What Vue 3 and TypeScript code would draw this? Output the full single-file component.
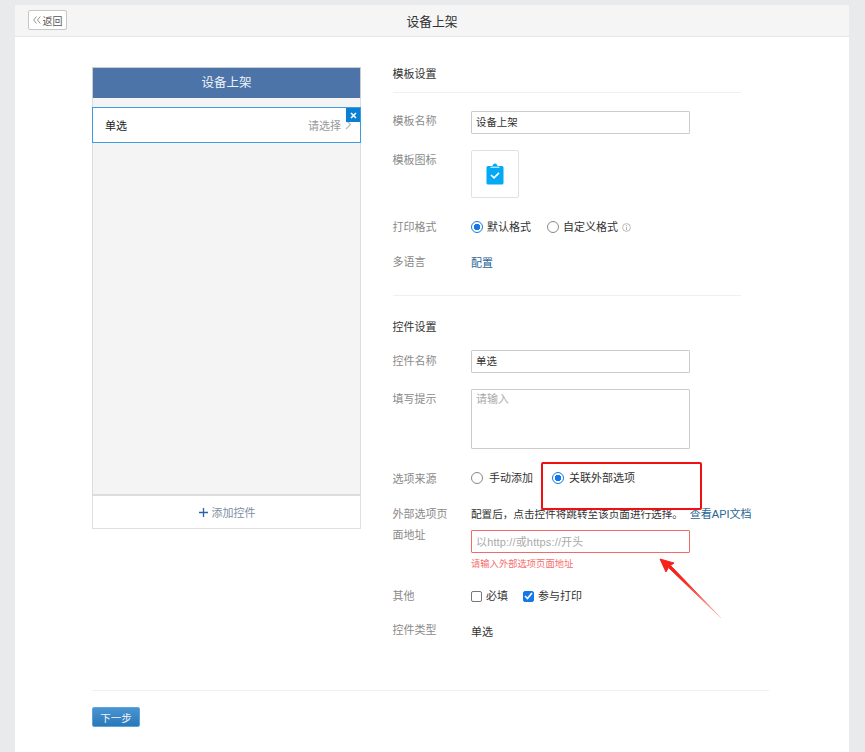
<script setup lang="ts">
const placeholder = '以http://或https://开头'
</script>

<template>
  <div class="page">
    <div class="card">
      <header class="top">
        <button class="back">
          <svg class="chev" width="8" height="8" viewBox="0 0 8 8"><path d="M3.500 .5L.7 4l2.800 3.500M7.300 .5L4.500 4l2.800 3.500" fill="none" stroke="#888" stroke-width=".9"/></svg>返回
        </button>
        <h1>设备上架</h1>
      </header>
      <main class="main">
        <section class="phone">
          <div class="phone-head">设备上架</div>
          <div class="phone-body">
            <div class="item">
              <span>单选</span>
              <span class="pick">请选择
                <svg width="7" height="11" viewBox="0 0 7 11"><path d="M1 1l4.500 4.500L1 10" fill="none" stroke="#bbb" stroke-width="1.200"/></svg>
              </span>
              <i class="close">
                <svg width="7" height="7" viewBox="0 0 7 7"><path d="M1 1l5 5M6 1L1 6" stroke="#fff" stroke-width="1.600"/></svg>
              </i>
            </div>
          </div>
          <div class="phone-foot">
            <svg class="plus" width="9" height="9" viewBox="0 0 9 9"><path d="M4.500 0v9M0 4.500h9" stroke="#2b64a4" stroke-width="1.300"/></svg>添加控件
          </div>
        </section>

        <section class="form">
          <h2 class="sec">模板设置</h2>
          <div class="row r-name">
            <label>模板名称</label>
            <div class="input">设备上架</div>
          </div>
          <div class="row r-icon">
            <label>模板图标</label>
            <div class="iconbox">
              <svg width="18" height="22" viewBox="0 0 18 22">
                <path d="M2 3h4.500C6.800 1.500 7.800.5 9 .5s2.200 1 2.500 2.500H16a1.500 1.500 0 0 1 1.500 1.500v15.500a1.500 1.500 0 0 1-1.500 1.500H2a1.500 1.500 0 0 1-1.500-1.500V4.500A1.500 1.500 0 0 1 2 3z" fill="#03a9f4"/>
                <path d="M4.500 4.200h9" stroke="#fff" stroke-width="1"/>
                <path d="M5 12l3 2.800 5-5" fill="none" stroke="#fff" stroke-width="1.700"/>
              </svg>
            </div>
          </div>
          <div class="row r-print">
            <label>打印格式</label>
            <div class="opts">
              <span class="opt"><i class="radio on"></i>默认格式</span>
              <span class="opt o2"><i class="radio"></i>自定义格式
                <svg class="info" width="9" height="9" viewBox="0 0 9 9"><circle cx="4.500" cy="4.500" r="3.900" fill="none" stroke="#aaa" stroke-width=".8"/><path d="M4.500 2v1M4.500 3.800V7" stroke="#aaa" stroke-width=".9"/></svg>
              </span>
            </div>
          </div>
          <div class="row r-lang">
            <label>多语言</label>
            <a class="link">配置</a>
          </div>
          <div class="divider"></div>

          <h2 class="sec plain">控件设置</h2>
          <div class="row r-ctl">
            <label>控件名称</label>
            <div class="input">单选</div>
          </div>
          <div class="row r-hint">
            <label>填写提示</label>
            <div class="input area">请输入</div>
          </div>
          <div class="row r-src">
            <label>选项来源</label>
            <div class="opts">
              <span class="opt"><i class="radio wide"></i>手动添加</span>
              <span class="opt o3"><i class="radio"></i>关联外部选项</span>
            </div>
          </div>
          <div class="row r-ext">
            <label>外部选项页面地址</label>
            <div class="ext">
              <div class="tip">配置后，点击控件将跳转至该页面进行选择。 <a class="link api">查看API文档</a></div>
              <div class="input err">{{ placeholder }}</div>
              <div class="errmsg">请输入外部选项页面地址</div>
            </div>
          </div>
          <div class="row r-other">
            <label>其他</label>
            <div class="opts">
              <span class="opt"><i class="check"></i>必填</span>
              <span class="opt o4"><i class="check on">
                <svg width="9" height="8" viewBox="0 0 9 8"><path d="M1 4l2.500 2.500L8 1" fill="none" stroke="#fff" stroke-width="1.700"/></svg>
              </i>参与打印</span>
            </div>
          </div>
          <div class="row r-type">
            <label>控件类型</label>
            <span>单选</span>
          </div>
        </section>
      </main>
      <footer class="foot">
        <button class="next">下一步</button>
      </footer>

      <div class="mark-box"></div>
      <svg class="mark-arrow" width="70" height="66" viewBox="0 0 70 66">
        <defs>
          <linearGradient id="fade" x1="1" y1="1" x2="0" y2="0">
            <stop offset="0" stop-color="#ff3b30" stop-opacity=".1"/>
            <stop offset=".6" stop-color="#f5231b"/>
          </linearGradient>
        </defs>
        <path d="M1 1l14 4-3.500 2.500L62 60 9.500 9.500 7 14z" fill="url(#fade)" stroke="url(#fade)" stroke-width="1"/>
      </svg>
    </div>
  </div>
</template>

<style>
html, body { margin: 0; background: #e9eaec; }
</style>

<style scoped>
.page {
  width: 865px;
  height: 752px;
  overflow: hidden;
  padding: 5px 16px 0 15px;
  box-sizing: border-box;
  font-family: "Liberation Sans", "Noto Sans CJK SC", sans-serif;
  font-size: 11px;
  color: #333;
}
.card { position: relative; background: #fff; height: 760px; }
.top {
  position: relative;
  height: 31px;
  background: #f5f5f5;
  border-bottom: 1px solid #e3e6ea;
  display: flex;
  align-items: center;
  justify-content: center;
}
.top h1 { margin: 0; font-size: 12.800px; font-weight: 400; color: #333; }
.back {
  position: absolute;
  left: 13px;
  top: 5px;
  width: 39px;
  height: 20px;
  padding: 0;
  background: #fff;
  border: 1px solid #c6c6c6;
  border-radius: 2px;
  font: inherit;
  font-size: 10px;
  color: #555;
  display: flex;
  align-items: center;
  justify-content: center;
}
.chev { margin-right: 2px; }
.main { display: flex; align-items: flex-start; padding: 30px 0 0 77px; height: 622px; box-sizing: border-box; }
.phone { width: 269px; height: 462px; display: flex; flex-direction: column; flex: none; }
.phone-head {
  height: 31px;
  background: #4c74a8;
  color: #eef3f8;
  font-size: 12.500px;
  display: flex;
  align-items: center;
  justify-content: center;
  box-sizing: border-box;
  border: 1px solid #c9ced4;
  border-bottom: 0;
  padding-bottom: 3px;
}
.phone-body {
  flex: 1;
  background: #f4f4f4;
  border: 1px solid #dcdcdc;
  border-width: 0 1px 2px;
  padding-top: 9px;
  margin: 0;
}
.item {
  position: relative;
  margin: 0 -1px;
  height: 36px;
  box-sizing: border-box;
  background: #fff;
  border: 1px solid #3f9ae0;
  display: flex;
  align-items: center;
  justify-content: space-between;
  padding: 0 8px 1px 12px;
  color: #222;
}
.pick { color: #999; display: flex; align-items: center; gap: 4px; }
.close {
  position: absolute;
  right: 0;
  top: 0;
  width: 14px;
  height: 14px;
  background: #0a80d5;
  display: flex;
  align-items: center;
  justify-content: center;
}
.phone-foot {
  height: 33px;
  box-sizing: border-box;
  background: #fff;
  border: 1px solid #e0e0e0;
  border-top: 0;
  display: flex;
  align-items: center;
  justify-content: center;
  color: #7d8ea3;
}
.plus { margin-right: 4px; margin-left: 1px; }

.form { margin-left: 31.500px; width: 348.500px; flex: none; }
.sec {
  margin: 0;
  font-size: 11px;
  font-weight: 400;
  color: #333;
  line-height: 14px;
  padding-bottom: 11px;
  border-bottom: 1px solid #f0f0f0;
}
.sec.plain { border: 0; padding: 0; }
.row { display: flex; align-items: flex-start; }
.row > label { width: 78.500px; flex: none; color: #8a8a8a; line-height: 14px; }
.input {
  width: 219px;
  height: 23px;
  box-sizing: border-box;
  border: 1px solid #ccc;
  border-radius: 1px;
  padding: 0 4px;
  line-height: 22px;
  color: #333;
  font-size: 10.400px;
}
.input.area { height: 60px; color: #aaa; line-height: 18px; font-size: 11px; }
.input.err { border: 1px solid #f26a6a; color: #aaa; font-size: 11px; letter-spacing: .15px; }
.iconbox {
  width: 48px;
  height: 48px;
  box-sizing: border-box;
  border: 1px solid #dfe1e6;
  border-radius: 2px;
  display: flex;
  align-items: center;
  justify-content: center;
}
.opts { display: flex; align-items: center; }
.opt { display: inline-flex; align-items: center; line-height: 14px; color: #333; }
.radio {
  width: 12px;
  height: 12px;
  box-sizing: border-box;
  border: 1px solid #888;
  border-radius: 50%;
  margin-right: 4px;
  background: #fff;
}
.radio.wide { margin-right: 6px; }
.radio.on, .o3 .radio { border-color: #1479e8; background: radial-gradient(circle, #1479e8 0 3px, #fff 3.500px); }
.o3 .radio { margin-right: 5px; }
.check {
  width: 11px;
  height: 11px;
  box-sizing: border-box;
  border: 1px solid #777;
  border-radius: 2px;
  margin-right: 4px;
  display: flex;
  align-items: center;
  justify-content: center;
}
.check.on { background: #1479e8; border-color: #1479e8; }
.o2 { margin-left: 16px; }
.o3 { margin-left: 19px; }
.o4 { margin-left: 15px; }
.info { margin-left: 4px; }
.link { color: #2a6496; }
.api { margin-left: 4px; font-size: 11px; }
.tip { line-height: 14px; white-space: nowrap; color: #333; font-size: 10.600px; }
.ext { display: flex; flex-direction: column; }
.ext .input { margin-top: 9px; }
.errmsg { color: #f56c6c; font-size: 9.300px; line-height: 14px; margin-top: 4px; }
.r-ext > label { width: 62.500px; margin-right: 16px; line-height: 21px; margin-top: -3px; }
.r-name { margin-top: 18px; }
.r-name > label { margin-top: 3px; }
.r-icon { margin-top: 16px; }
.r-icon > label { margin-top: 3px; }
.r-print { margin-top: 22px; }
.r-lang { margin-top: 20px; }
.r-lang > label { margin-top: 1px; }
.divider { height: 1px; background: #f0f0f0; margin-top: 25px; }
.sec.plain { margin-top: 24px; }
.r-ctl { margin-top: 16px; }
.r-ctl > label { margin-top: 4px; }
.r-hint { margin-top: 16px; }
.r-hint > label { margin-top: 3px; }
.r-src { margin-top: 22px; }
.r-src > label { margin-top: 1px; }
.r-ext { margin-top: 21px; }
.r-other { margin-top: 18px; }
.r-type { margin-top: 20px; }

.foot {
  margin: 0 80px 0 77px;
  border-top: 1px solid #f0f0f0;
  padding-top: 16px;
  margin-top: 31px;
}
.next {
  display: block;
  width: 48px;
  height: 20px;
  padding: 0;
  background: linear-gradient(#4a94d2, #2a78b8);
  border: 1px solid #5aa5dc;
  border-radius: 2px;
  color: #eef5fb;
  font: inherit;
  font-size: 10.500px;
}
.mark-box {
  position: absolute;
  left: 526px;
  top: 457px;
  width: 161px;
  height: 48px;
  box-sizing: border-box;
  border: 2px solid #f01010;
  border-radius: 2px;
}
.mark-arrow { position: absolute; left: 644px; top: 553px; }
</style>
